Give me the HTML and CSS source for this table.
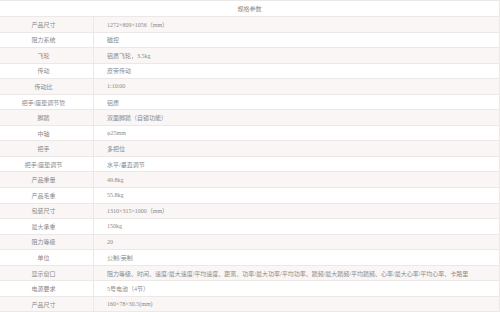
FILE: index.html
```html
<!DOCTYPE html>
<html lang="zh-CN">
<head>
<meta charset="utf-8">
<title>规格参数</title>
<link rel="stylesheet" href="styles.css">
</head>
<body>
<div class="spec">
  <div class="spec-head">规格参数</div>
  <div class="row"><div class="k">产品尺寸</div><div class="v">1272×809×1056（mm）</div></div>
  <div class="row"><div class="k">阻力系统</div><div class="v">磁控</div></div>
  <div class="row"><div class="k">飞轮</div><div class="v">铝质飞轮，3.5kg</div></div>
  <div class="row"><div class="k">传动</div><div class="v">皮带传动</div></div>
  <div class="row"><div class="k">传动比</div><div class="v">1:10:00</div></div>
  <div class="row"><div class="k">把手/座垫调节管</div><div class="v">铝质</div></div>
  <div class="row"><div class="k">脚踏</div><div class="v">双面脚踏（自锁功能）</div></div>
  <div class="row"><div class="k">中轴</div><div class="v">φ25mm</div></div>
  <div class="row"><div class="k">把手</div><div class="v">多把位</div></div>
  <div class="row"><div class="k">把手/座垫调节</div><div class="v">水平/垂直调节</div></div>
  <div class="row"><div class="k">产品重量</div><div class="v">49.8kg</div></div>
  <div class="row"><div class="k">产品毛重</div><div class="v">55.8kg</div></div>
  <div class="row"><div class="k">包装尺寸</div><div class="v">1310×315×1000（mm）</div></div>
  <div class="row"><div class="k">最大承重</div><div class="v">150kg</div></div>
  <div class="row"><div class="k">阻力等级</div><div class="v">20</div></div>
  <div class="row"><div class="k">单位</div><div class="v">公制/英制</div></div>
  <div class="row"><div class="k">显示窗口</div><div class="v">阻力等级、时间、速度/最大速度/平均速度、距离、功率/最大功率/平均功率、踏频/最大踏频/平均踏频、心率/最大心率/平均心率、卡路里</div></div>
  <div class="row"><div class="k">电源要求</div><div class="v">5号电池（4节）</div></div>
  <div class="row"><div class="k">产品尺寸</div><div class="v">160×78×30.5(mm)</div></div>
</div>
</body>
</html>
```
FILE: styles.css
```css
html, body {
  margin: 0;
  padding: 0;
  background: #ffffff;
}

.spec {
  width: 500px;
  box-sizing: border-box;
  border-top: 1px solid #ece8e7;
  border-right: 1px solid #ece8e7;
  font-family: "Liberation Serif", "Noto Sans CJK SC", serif;
  font-size: 6px;
  color: #8a8a8a;
}

.spec-head {
  height: 16px;
  box-sizing: border-box;
  border-bottom: 1px solid #ece8e7;
  display: flex;
  align-items: center;
  justify-content: center;
}

.row {
  display: flex;
  height: 15.55px;
  box-sizing: border-box;
  border-bottom: 1px solid #ece8e7;
}

.row:nth-child(even) {
  background: #f9f6f5;
}

.k {
  width: 94px;
  flex: none;
  box-sizing: border-box;
  padding-right: 6px;
  border-right: 1px solid #ece8e7;
  display: flex;
  align-items: center;
  justify-content: center;
  white-space: nowrap;
}

.v {
  flex: 1;
  padding-left: 13px;
  display: flex;
  align-items: center;
  white-space: nowrap;
}
```
